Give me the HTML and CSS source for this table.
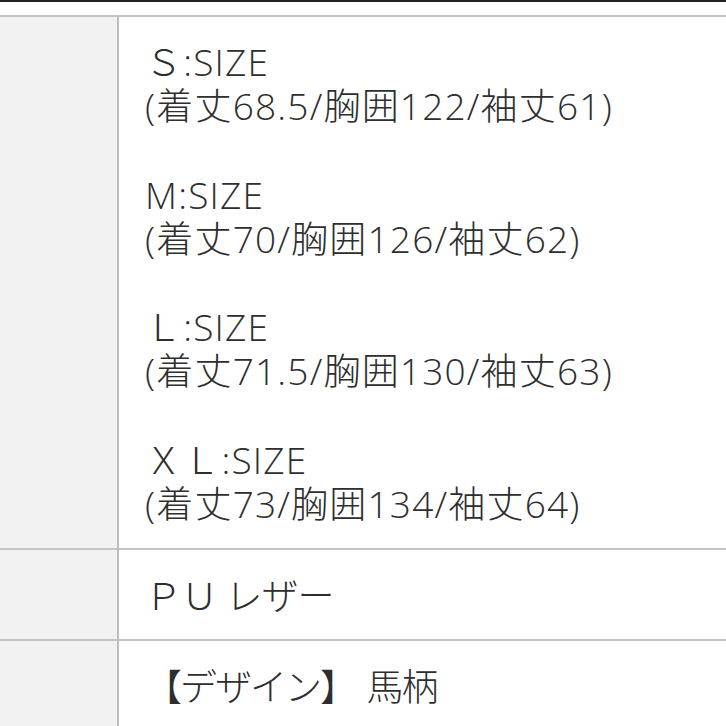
FILE: index.html
```html
<!DOCTYPE html>
<html lang="ja">
<head>
<meta charset="utf-8">
<link rel="stylesheet" href="styles.css">
</head>
<body>
<div class="page">
  <div class="topbar"></div>
  <table class="spec">
    <tr class="row-size">
      <th class="label"></th>
      <td class="value">
        <div class="group">Ｓ:SIZE<br>(着丈68.5/胸囲122/袖丈61)</div>
        <div class="group">M:SIZE<br>(着丈70/胸囲126/袖丈62)</div>
        <div class="group">Ｌ:SIZE<br>(着丈71.5/胸囲130/袖丈63)</div>
        <div class="group">ＸＬ:SIZE<br>(着丈73/胸囲134/袖丈64)</div>
      </td>
    </tr>
    <tr class="row-material">
      <th class="label"></th>
      <td class="value">ＰＵ レザー</td>
    </tr>
    <tr class="row-design">
      <th class="label"></th>
      <td class="value">【デザイン】<span class="gap">　</span>馬柄</td>
    </tr>
  </table>
</div>
</body>
</html>
```
FILE: styles.css
```css
html, body {
  margin: 0;
  padding: 0;
  background: #ffffff;
}
.page {
  width: 726px;
  height: 726px;
  overflow: hidden;
}
.topbar {
  height: 2px;
  background: #222222;
  margin-bottom: 13px;
}
.spec {
  border-collapse: collapse;
  width: 726px;
  font-family: "Open Sans", "Noto Sans CJK JP", sans-serif;
  font-size: 37px;
  font-weight: 300;
  line-height: 44.2px;
  color: #2e2e2e;
}
.spec tr {
  border-top: 2px solid #c4c4c4;
}
.label {
  width: 117px;
  background: #f2f2f2;
  border-right: 2px solid #bdbdbd;
  padding: 0;
}
.value {
  padding: 24px 0 21px 26px;
  text-align: left;
  vertical-align: top;
  white-space: nowrap;
}
.row-size .value {
  padding-top: 23px;
  padding-bottom: 22px;
  letter-spacing: 1.2px;
}
.row-material .value {
  letter-spacing: -1px;
}
.row-design .value {
  letter-spacing: -2px;
}
.gap {
  letter-spacing: -7px;
}
.group + .group {
  margin-top: 44.2px;
}
```
